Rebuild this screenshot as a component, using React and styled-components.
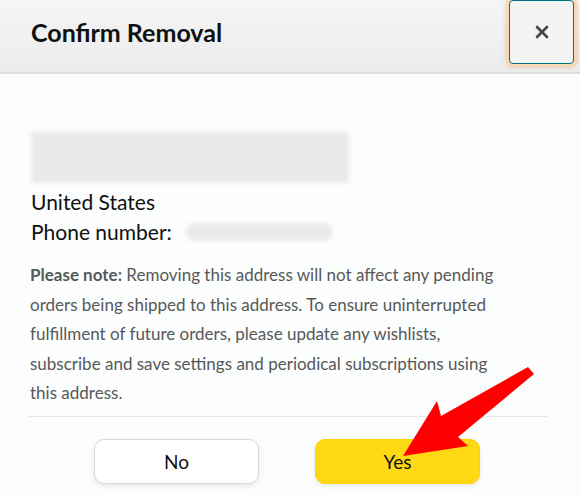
import React from 'react';
import styled, { createGlobalStyle } from 'styled-components';

const GlobalStyle = createGlobalStyle`
  body {
    margin: 0;
    background: #fcfdfd;
    font-family: Lato, "Noto Sans", sans-serif;
  }
`;

const Dialog = styled.div`
  position: relative;
  width: 580px;
  height: 499px;
  background: #fcfdfd;
  overflow: hidden;
`;

const Header = styled.div`
  height: 74px;
  display: flex;
  align-items: center;
  justify-content: space-between;
  padding: 0 6px 0 31px;
  background: linear-gradient(#f5f5f5, #ececec);
  border-bottom: 2px solid #dddddd;
  box-sizing: border-box;
`;

const Title = styled.h2`
  margin: 0;
  font-size: 25px;
  font-weight: 700;
  color: #0f1111;
  margin-top: -8px;
`;

const CloseButton = styled.button`
  width: 65px;
  height: 64px;
  margin-top: -8px;
  border: 1px solid #007185;
  border-radius: 4px;
  background: #f3f3f3;
  box-shadow: 0 0 0 2px #fbd8b4, 0 0 4px 3px rgba(240, 160, 90, 0.5);
  display: flex;
  align-items: center;
  justify-content: center;
  cursor: pointer;
`;

const Body = styled.div`
  padding: 0 32px 0 30px;
`;

const Redacted = styled.div`
  width: ${p => p.w}px;
  height: ${p => p.h}px;
  margin-bottom: ${p => p.mb || 0}px;
  background: #e9e9e9;
  filter: blur(2px);
  border-radius: ${p => p.r || 0}px;
`;

const AddressBlock = styled.div`
  margin-top: 58px;
  margin-left: 1px;
`;

const Line = styled.div`
  display: flex;
  align-items: center;
  gap: 14px;
  font-size: 21px;
  line-height: 30px;
  color: #0f1111;
`;

const Note = styled.p`
  max-width: 472px;
  margin: 13px 0 0;
  font-size: 17px;
  line-height: 29.5px;
  color: #565959;

  b {
    color: #565959;
  }
`;

const Divider = styled.hr`
  margin: 8px 0 0 -2px;
  border: none;
  border-top: 1px solid #e7e7e7;
`;

const Actions = styled.div`
  display: flex;
  justify-content: center;
  gap: 56px;
  margin-top: 22px;
  padding-right: 4px;
`;

const Button = styled.button`
  width: 165px;
  height: 45px;
  border-radius: 10px;
  font-family: inherit;
  font-size: 19px;
  color: #0f1111;
  border: 1px solid ${p => (p.primary ? '#fcd200' : '#d5d9d9')};
  background: ${p => (p.primary ? '#ffd814' : '#ffffff')};
  box-shadow: 0 2px 5px rgba(213, 217, 217, 0.5);
  cursor: pointer;
`;

const Arrow = styled.svg`
  position: absolute;
  left: 0;
  top: 0;
  pointer-events: none;
`;

export default function App() {
  return (
    <>
      <GlobalStyle />
      <Dialog>
        <Header>
          <Title>Confirm Removal</Title>
          <CloseButton aria-label="Close">
            <svg width="14" height="14" viewBox="0 0 14 14">
              <path d="M2 2 L12 12 M12 2 L2 12" stroke="#444" strokeWidth="2.6" strokeLinecap="round" />
            </svg>
          </CloseButton>
        </Header>
        <Body>
          <AddressBlock>
            <Redacted w={318} h={51} mb={4} />
            <Line>United States</Line>
            <Line>
              Phone number: <Redacted w={146} h={18} r={9} />
            </Line>
          </AddressBlock>
          <Note>
            <b>Please note:</b> Removing this address will not affect any pending orders being shipped to
            this address. To ensure uninterrupted fulfillment of future orders, please update any wishlists,
            subscribe and save settings and periodical subscriptions using this address.
          </Note>
          <Divider />
          <Actions>
            <Button>No</Button>
            <Button primary>Yes</Button>
          </Actions>
        </Body>
        <Arrow width="580" height="499" viewBox="0 0 580 499">
          <polygon
            points="528,367 534,374 458,437 468,446 403,456 437,401 441,416"
            fill="#ff0000"
          />
        </Arrow>
      </Dialog>
    </>
  );
}
